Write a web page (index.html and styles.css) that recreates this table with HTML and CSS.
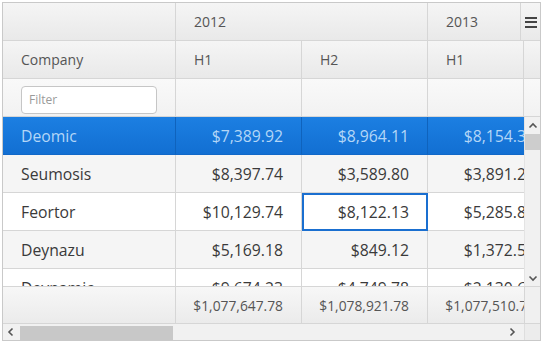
FILE: index.html
```html
<!DOCTYPE html>
<html>
<head>
<meta charset="utf-8">
<link rel="stylesheet" href="styles.css">
</head>
<body>
<div class="grid">
  <div class="head">
    <div class="row hrow">
      <div class="cell c0"></div>
      <div class="cell span2">2012</div>
      <div class="cell c3n">2013</div>
      <div class="cell menu"><span class="bars"><i></i><i></i><i></i></span></div>
    </div>
    <div class="row hrow">
      <div class="cell c0">Company</div>
      <div class="cell c1">H1</div>
      <div class="cell c1">H2</div>
      <div class="cell c3">H1</div>
      <div class="cell gutter"></div>
    </div>
    <div class="row frow">
      <div class="cell c0"><input class="filter" type="text" placeholder="Filter"></div>
      <div class="cell c1"></div>
      <div class="cell c1"></div>
      <div class="cell c3"></div>
      <div class="cell gutter"></div>
    </div>
  </div>
  <div class="body">
    <div class="rows">
      <div class="row drow sel">
        <div class="cell c0">Deomic</div>
        <div class="cell c1 num">$7,389.92</div>
        <div class="cell c1 num">$8,964.11</div>
        <div class="cell c1 num">$8,154.30</div>
      </div>
      <div class="row drow alt">
        <div class="cell c0">Seumosis</div>
        <div class="cell c1 num">$8,397.74</div>
        <div class="cell c1 num">$3,589.80</div>
        <div class="cell c1 num">$3,891.20</div>
      </div>
      <div class="row drow">
        <div class="cell c0">Feortor</div>
        <div class="cell c1 num">$10,129.74</div>
        <div class="cell c1 num focus">$8,122.13</div>
        <div class="cell c1 num">$5,285.80</div>
      </div>
      <div class="row drow alt">
        <div class="cell c0">Deynazu</div>
        <div class="cell c1 num">$5,169.18</div>
        <div class="cell c1 num">$849.12</div>
        <div class="cell c1 num">$1,372.50</div>
      </div>
      <div class="row drow">
        <div class="cell c0">Deynamic</div>
        <div class="cell c1 num">$9,674.23</div>
        <div class="cell c1 num">$4,749.78</div>
        <div class="cell c1 num">$2,130.60</div>
      </div>
    </div>
    <div class="vscroll">
      <svg class="arr up" width="10" height="7" viewBox="0 0 10 7"><polyline points="1.5,5.5 5,2 8.5,5.5" fill="none" stroke="#555" stroke-width="1.6"/></svg>
      <div class="vthumb"></div>
      <svg class="arr down" width="10" height="7" viewBox="0 0 10 7"><polyline points="1.5,1.5 5,5 8.5,1.5" fill="none" stroke="#555" stroke-width="1.6"/></svg>
    </div>
  </div>
  <div class="foot">
    <div class="fview">
      <div class="row frow2">
        <div class="cell c0"></div>
        <div class="cell c1 num">$1,077,647.78</div>
        <div class="cell c1 num">$1,078,921.78</div>
        <div class="cell c1 num">$1,077,510.78</div>
      </div>
    </div>
    <div class="cell gutter"></div>
  </div>
  <div class="hscroll">
    <div class="harea">
      <svg class="harr" width="8" height="10" viewBox="0 0 8 10"><polyline points="5.5,1.5 2,5 5.5,8.5" fill="none" stroke="#555" stroke-width="1.6"/></svg>
      <div class="hthumb"></div>
      <div class="htrack"></div>
      <svg class="harr r" width="8" height="10" viewBox="0 0 8 10"><polyline points="2.5,1.5 6,5 2.5,8.5" fill="none" stroke="#555" stroke-width="1.6"/></svg>
    </div>
    <div class="corner"></div>
  </div>
</div>
</body>
</html>
```

FILE: styles.css
```css
html, body {
  margin: 0;
  padding: 0;
  background: #fff;
}
body {
  padding: 2px;
  font-family: "Open Sans", "DejaVu Sans", sans-serif;
  font-size: 14px;
  color: #333;
}
.grid {
  width: 539px;
  height: 339px;
  box-sizing: border-box;
  border: 1px solid #c9c9c9;
  display: flex;
  flex-direction: column;
  overflow: hidden;
}
.row {
  display: flex;
  flex: none;
  height: 38px;
}
.cell {
  flex: none;
  box-sizing: border-box;
  height: 38px;
  border-right: 1px solid #d6d6d6;
  border-bottom: 1px solid #d6d6d6;
  padding: 0 18px;
  display: flex;
  align-items: center;
  white-space: nowrap;
  overflow: hidden;
}
.c0 { width: 173px; }
.c1 { width: 126px; }
.c3 { width: 96px; }
.span2 { width: 252px; }
.c3n { width: 93px; }
.menu { width: 19px; border-right: none; padding: 0; }
.gutter { width: 16px; border-right: none; padding: 0; }
.head { flex: none; }
.hrow .cell {
  background: linear-gradient(#f5f5f5, #e9e9e9);
  color: #555;
}
.frow .cell {
  background: linear-gradient(#f9f9f9, #f2f2f2);
}
.bars {
  display: flex;
  flex-direction: column;
  gap: 2.5px;
  margin-left: 4px;
  margin-top: 1px;
}
.bars i {
  display: block;
  width: 12px;
  height: 2px;
  background: #444;
}
.filter {
  box-sizing: border-box;
  width: 136px;
  height: 28px;
  margin-top: 4px;
  border: 1px solid #c6c6c6;
  border-radius: 4px;
  background: #fff;
  padding: 0 7px;
  font-family: "Open Sans", "DejaVu Sans", sans-serif;
  font-size: 12px;
  color: #333;
  outline: none;
}
.filter::placeholder { color: #9a9a9a; }
.body {
  flex: none;
  height: 169px;
  display: flex;
  overflow: hidden;
}
.rows {
  width: 521px;
  flex: none;
  overflow: hidden;
}
.drow .cell {
  background: #fff;
  font-size: 15.75px;
  color: #3a3a3a;
}
.drow.alt .cell { background: #f5f5f5; }
.num { justify-content: flex-end; }
.drow.sel .cell {
  background: linear-gradient(#1c7fe2, #126fd2);
  color: #b3d6f7;
  border-right-color: #0f63bd;
  border-bottom-color: #1168c8;
}
.drow .cell.focus {
  border: 2px solid #1a6fd0;
  padding-right: 17px;
}
.vscroll {
  width: 16px;
  flex: none;
  background: #f1f1f1;
  border-left: 1px solid #e4e4e4;
  position: relative;
}
.arr { position: absolute; left: 3px; }
.arr.up { top: 5px; }
.arr.down { top: 158px; }
.vthumb {
  position: absolute;
  left: 0;
  right: 0;
  top: 17px;
  height: 16px;
  background: #cdcdcd;
}
.foot {
  flex: none;
  display: flex;
  height: 38px;
}
.fview {
  width: 521px;
  flex: none;
  overflow: hidden;
}
.foot .cell {
  height: 38px;
  border-top: 1px solid #d6d6d6;
  background: linear-gradient(#f7f7f7, #ebebeb);
  color: #555;
  font-size: 13.8px;
}
.foot .gutter {
  background: #f0f0f0;
  border-left: 1px solid #d6d6d6;
}
.hscroll {
  flex: none;
  height: 16px;
  display: flex;
  background: #f1f1f1;
}
.harea {
  width: 521px;
  flex: none;
  display: flex;
  align-items: center;
}
.harr { flex: none; margin: 0 5px 0 4px; }
.harr.r { margin: 0 8px 0 6px; }
.hthumb {
  flex: none;
  width: 153px;
  height: 14px;
  margin-top: 1px;
  background: #c8c8c8;
}
.htrack { flex: 1; }
.corner {
  width: 16px;
  flex: none;
  background: #ececec;
  border-left: 1px solid #dedede;
}
```
